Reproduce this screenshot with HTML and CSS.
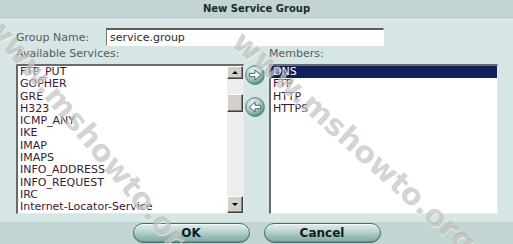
FILE: index.html
```html
<!DOCTYPE html>
<html lang="en">
<head>
  <meta charset="UTF-8" />
  <title>New Service Group</title>
  <link rel="stylesheet" href="styles.css">
</head>
<body>
  <div class="dialog">
    <div class="title">New Service Group</div>

    <div class="body">
      <div class="name-row">
        <label class="lbl name-lbl" for="groupName">Group Name:</label>
        <input class="name-input" id="groupName" type="text" value="service.group" />
      </div>

      <div class="lists">
        <div class="col">
          <div class="lbl list-lbl">Available Services:</div>
          <div class="listbox">
            <ul class="items">
              <li>FTP_PUT</li>
              <li>GOPHER</li>
              <li>GRE</li>
              <li>H323</li>
              <li>ICMP_ANY</li>
              <li>IKE</li>
              <li>IMAP</li>
              <li>IMAPS</li>
              <li>INFO_ADDRESS</li>
              <li>INFO_REQUEST</li>
              <li>IRC</li>
              <li>Internet-Locator-Service</li>
            </ul>
            <div class="scrollbar">
              <div class="sb-btn sb-up"></div>
              <div class="sb-track"><div class="sb-thumb"></div></div>
              <div class="sb-btn sb-down"></div>
            </div>
          </div>
        </div>

        <!-- move buttons -->
        <div class="movers">
          <svg class="mover" width="20" height="20" viewBox="0 0 20 20">
            <defs>
              <radialGradient id="ball" cx="38%" cy="32%" r="70%">
                <stop offset="0" stop-color="#f1f8f7" />
                <stop offset="0.55" stop-color="#a9cbc6" />
                <stop offset="1" stop-color="#5a8c86" />
              </radialGradient>
            </defs>
            <circle cx="10" cy="10" r="9.4" fill="url(#ball)" stroke="#45716c" stroke-width="0.8" />
            <path d="M4.4 8.3 H10 V5 L15.6 10 L10 15 V11.7 H4.4 Z" fill="#fff" stroke="#3e6b66" stroke-width="1" stroke-linejoin="round" />
          </svg>
          <svg class="mover" width="20" height="20" viewBox="0 0 20 20">
            <circle cx="10" cy="10" r="9.4" fill="url(#ball)" stroke="#45716c" stroke-width="0.8" />
            <path d="M15.6 8.3 H10 V5 L4.4 10 L10 15 V11.7 H15.6 Z" fill="#fff" stroke="#3e6b66" stroke-width="1" stroke-linejoin="round" />
          </svg>
        </div>

        <div class="col">
          <div class="lbl list-lbl">Members:</div>
          <div class="listbox">
            <ul class="items members">
              <li class="selected">DNS</li>
              <li>FTP</li>
              <li>HTTP</li>
              <li>HTTPS</li>
            </ul>
          </div>
        </div>
      </div>
    </div>

    <div class="footer">
      <button class="btn">OK</button>
      <button class="btn">Cancel</button>
    </div>

    <span class="wm wm-left">www.mshowto.org</span>
    <span class="wm wm-right">www.mshowto.org</span>
  </div>
</body>
</html>
```

FILE: styles.css
```css
body {
  margin: 0;
  background: #d6e6e4;
  font-family: "DejaVu Sans", Verdana, sans-serif;
  font-size: 11px;
}
.dialog {
  position: relative;
  width: 513px;
  height: 244px;
  overflow: hidden;
  display: flex;
  flex-direction: column;
}
.title {
  height: 19px;
  line-height: 18px;
  background: #c2d5d3;
  border-bottom: 1px solid #e6f0ee;
  text-align: center;
  font-size: 10px;
  font-weight: bold;
  color: #1c2a2a;
}
.body {
  flex: 1;
  padding: 0 15px 0 16px;
}
.lbl {
  color: #5a5a5a;
}
.name-row {
  display: flex;
  align-items: center;
  margin-top: 8px;
  margin-bottom: 1px;
}
.name-lbl {
  width: 90px;
}
.name-input {
  box-sizing: border-box;
  width: 278px;
  height: 18px;
  margin: 0;
  padding: 0 3px;
  border: 1px solid #fff;
  border-top: 2px solid #5c5c5c;
  border-left-color: #7a7a7a;
  background: #fff;
  font-family: inherit;
  font-size: 11px;
  color: #2a2a2a;
  outline: none;
}
.lists {
  display: grid;
  grid-template-columns: 228px 25px 229px;
}
.list-lbl {
  line-height: 14px;
  margin-bottom: 3px;
}
.listbox {
  box-sizing: border-box;
  position: relative;
  height: 150px;
  background: #fff;
  border: 1px solid #e4ecea;
  border-top: 2px solid #6a6a6a;
  border-left: 2px solid #6a6a6a;
  display: flex;
}
.items {
  flex: 1;
  list-style: none;
  margin: 0;
  padding: 0;
  line-height: 12.3px;
  color: #3a1836;
}
.items li {
  padding-left: 2px;
  white-space: nowrap;
}
.items .selected {
  background: #10205c;
  color: #fff;
}
.scrollbar {
  width: 16px;
  display: flex;
  flex-direction: column;
  background: #ededed;
}
.sb-btn,
.sb-thumb {
  box-sizing: border-box;
  background: #d4d0c8;
  border: 1px solid;
  border-color: #fff #404040 #404040 #fff;
  box-shadow: inset -1px -1px 0 #808080;
  position: relative;
}
.sb-up {
  height: 13px;
}
.sb-down {
  height: 17px;
}
.sb-track {
  flex: 1;
}
.sb-thumb {
  margin-top: 15px;
  height: 18px;
}
.sb-btn::after {
  content: "";
  position: absolute;
  left: 4px;
  top: 4px;
  border-left: 3px solid transparent;
  border-right: 3px solid transparent;
}
.sb-up::after {
  border-bottom: 3px solid #000;
}
.sb-down::after {
  top: 6px;
  border-top: 3px solid #000;
}
.movers {
  display: flex;
  flex-direction: column;
  gap: 12px;
  padding: 18px 0 0 1px;
}
.mover {
  display: block;
}
.footer {
  height: 22px;
  background: #c2d5d3;
  display: flex;
  align-items: center;
  justify-content: center;
  gap: 14px;
}
.btn {
  box-sizing: border-box;
  width: 117px;
  height: 20px;
  margin: 0;
  padding: 0;
  border: 1px solid #4b6d69;
  border-radius: 10px;
  background: linear-gradient(#e2eeec, #bcd6d2 40%, #9dc1bc 65%, #7ea7a2);
  box-shadow: inset 0 1px 0 #f4faf9, inset 0 -1px 0 #6d9590;
  font-family: inherit;
  font-size: 12px;
  font-weight: bold;
  color: #121a1a;
  cursor: pointer;
}
.wm {
  position: absolute;
  font-size: 30px;
  font-weight: bold;
  line-height: 30px;
  white-space: nowrap;
  color: rgba(150, 150, 150, 0.42);
  text-shadow: 1px 1px 0 rgba(255, 255, 255, 0.55);
  transform-origin: 0 50%;
  pointer-events: none;
}
.wm-left {
  left: -9px;
  top: 4px;
  transform: rotate(50deg);
}
.wm-right {
  left: 237px;
  top: 22px;
  transform: rotate(42deg);
}
```
